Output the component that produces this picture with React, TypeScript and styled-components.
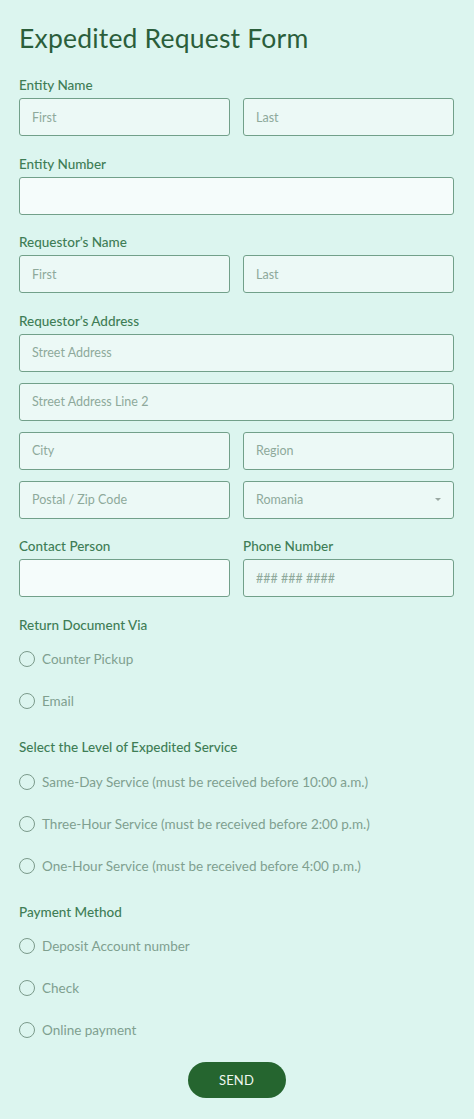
import React from 'react'
import styled, { createGlobalStyle } from 'styled-components'

const GlobalStyle = createGlobalStyle`
  * { box-sizing: border-box; }
  html, body {
    margin: 0;
    padding: 0;
    background: #dcf5ef;
    font-family: Lato, "Open Sans", sans-serif;
  }
`

const returnOptions = ['Counter Pickup', 'Email']
const serviceOptions = [
  'Same-Day Service (must be received before 10:00 a.m.)',
  'Three-Hour Service (must be received before 2:00 p.m.)',
  'One-Hour Service (must be received before 4:00 p.m.)',
]
const paymentOptions = ['Deposit Account number', 'Check', 'Online payment']

const RadioGroup = ({ label, options }: { label: string; options: string[] }) => (
  <Group>
    <GroupLabel>{label}</GroupLabel>
    {options.map((o) => (
      <RadioRow key={o}>
        <RadioCircle />
        <RadioText>{o}</RadioText>
      </RadioRow>
    ))}
  </Group>
)

const App = () => {
  return (
    <Page>
      <GlobalStyle />
      <Title>Expedited Request Form</Title>

      <Field>
        <Label>Entity Name</Label>
        <Row>
          <Input placeholder="First" />
          <Input placeholder="Last" />
        </Row>
      </Field>

      <Field>
        <Label>Entity Number</Label>
        <Input empty />
      </Field>

      <Field>
        <Label>Requestor’s Name</Label>
        <Row>
          <Input placeholder="First" />
          <Input placeholder="Last" />
        </Row>
      </Field>

      <Field>
        <Label>Requestor’s Address</Label>
        <Stack>
          <Input placeholder="Street Address" />
          <Input placeholder="Street Address Line 2" />
          <Row>
            <Input placeholder="City" />
            <Input placeholder="Region" />
          </Row>
          <Row>
            <Input placeholder="Postal / Zip Code" />
            <SelectBox>
              <SelectText>Romania</SelectText>
              <Caret />
            </SelectBox>
          </Row>
        </Stack>
      </Field>

      <Row>
        <Field>
          <Label>Contact Person</Label>
          <Input empty />
        </Field>
        <Field>
          <Label>Phone Number</Label>
          <Input placeholder="### ### ####" />
        </Field>
      </Row>

      <RadioGroup label="Return Document Via" options={returnOptions} />
      <RadioGroup label="Select the Level of Expedited Service" options={serviceOptions} />
      <RadioGroup label="Payment Method" options={paymentOptions} />

      <ButtonWrapper>
        <SendButton>SEND</SendButton>
      </ButtonWrapper>
    </Page>
  )
}

export default App

const Page = styled.div`
  width: 474px;
  min-height: 1119px;
  padding: 21px 20px 20px 19px;
  background: #dcf5ef;
  display: flex;
  flex-direction: column;
`

const Title = styled.h1`
  margin: 0 0 22px;
  font-size: 26.5px;
  line-height: 34px;
  font-weight: 400;
  color: #2b5e3b;
  letter-spacing: 0.2px;
`

const Field = styled.div`
  display: flex;
  flex-direction: column;
  margin-bottom: 19.5px;
`

const Label = styled.div`
  font-size: 13.5px;
  line-height: 16px;
  font-weight: 500;
  color: #3f7d56;
  margin-bottom: 5px;
`

const GroupLabel = styled(Label)`
  margin-bottom: 5.5px;
`

const Row = styled.div`
  display: flex;
  gap: 13px;
  & > * {
    flex: 1;
    min-width: 0;
  }
`

const Stack = styled.div`
  display: flex;
  flex-direction: column;
  gap: 11px;
`

const Input = styled.input<{ empty?: boolean }>`
  display: block;
  width: 100%;
  height: 38px;
  padding: 0 12px;
  border: 1px solid #72a08a;
  border-radius: 3px;
  background: ${(p) => (p.empty ? '#f5fcfb' : '#ecf9f6')};
  font-family: inherit;
  font-size: 12.5px;
  color: #4f7562;
  outline: none;
  &::placeholder {
    color: #8ea99b;
  }
`

const SelectBox = styled.div`
  height: 38px;
  padding: 0 12px;
  border: 1px solid #72a08a;
  border-radius: 3px;
  background: #ecf9f6;
  display: flex;
  align-items: center;
  justify-content: space-between;
`

const SelectText = styled.span`
  font-size: 12.5px;
  color: #8ea99b;
`

const Caret = styled.span`
  width: 0;
  height: 0;
  border-left: 3px solid transparent;
  border-right: 3px solid transparent;
  border-top: 3px solid #9aa8a2;
`

const Group = styled.div`
  display: flex;
  flex-direction: column;
  margin-bottom: 17px;
`

const RadioRow = styled.div`
  display: flex;
  align-items: center;
  height: 42px;
  gap: 7px;
`

const RadioCircle = styled.span`
  width: 16px;
  height: 16px;
  border-radius: 50%;
  border: 1px solid #7b9a8b;
  background: transparent;
  flex-shrink: 0;
`

const RadioText = styled.span`
  font-size: 13.5px;
  color: #7fa08f;
`

const ButtonWrapper = styled.div`
  display: flex;
  justify-content: center;
  margin-top: -6px;
`

const SendButton = styled.button`
  width: 98px;
  height: 36px;
  border: none;
  border-radius: 18px;
  background: #25652f;
  color: #eef7f0;
  font-family: inherit;
  font-size: 13px;
  letter-spacing: 0.2px;
  cursor: pointer;
`
